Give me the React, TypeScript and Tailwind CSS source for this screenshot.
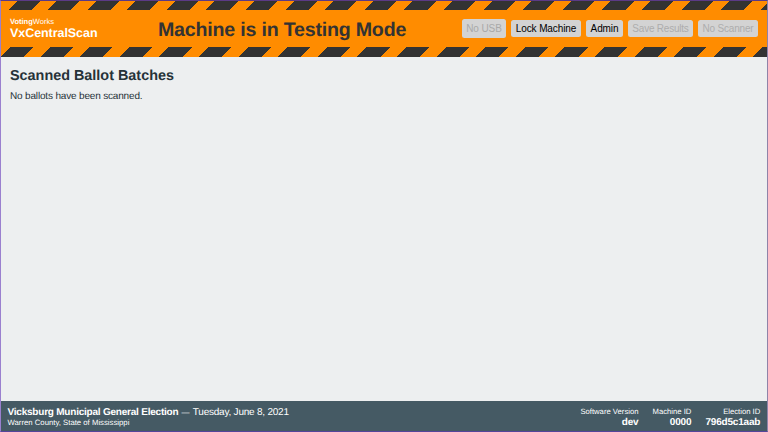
const stripes =
  'bg-[repeating-linear-gradient(135deg,#333_0px,#333_16.3px,#ff8c00_16.3px,#ff8c00_28px)]';

function HeaderButton({ label, className = '' }: { label: string; className?: string }) {
  return (
    <button
      className={`flex h-[17px] shrink-0 items-center justify-center whitespace-nowrap rounded-[2.5px] bg-[#d3d3d3] pt-px text-[10px] leading-none ${className}`}
    >
      {label}
    </button>
  );
}

function Meta({ label, value }: { label: string; value: string }) {
  return (
    <div className="flex shrink-0 flex-col items-end whitespace-nowrap">
      <div className="text-[7.7px] leading-[9px]">{label}</div>
      <div className="text-[10px] leading-[13px] font-bold tracking-[-0.18px]">{value}</div>
    </div>
  );
}

export default function App() {
  return (
    <div className="flex h-[432px] w-[768px] flex-col overflow-hidden border border-t-[#5b3a86] border-r-[#8f83a8] border-b-[#54459a] border-l-[#9a80cf] bg-[#edeff0] font-['Liberation_Sans',Arial,sans-serif] text-[#263238] [text-rendering:geometricPrecision]">
      <header className="flex h-14 shrink-0 flex-col bg-[#ff8c00]">
        <div className={`h-[9px] shrink-0 bg-position-[-23.6px_0px] bg-size-[900px_900px] ${stripes}`} />
        <div className="flex h-[37px] shrink-0 items-center pr-[9px] pl-[9px]">
          <div className="w-[148px] shrink-0 whitespace-nowrap text-white">
            <div className="text-[7.5px] leading-[9px]">
              <strong>Voting</strong>Works
            </div>
            <div className="text-[12.5px] leading-[14px] font-bold tracking-[-0.06px]">VxCentralScan</div>
          </div>
          <h1 className="grow whitespace-nowrap pt-[2px] text-[19.6px] leading-6 font-bold tracking-[-0.2px] text-[#333]">
            Machine is in Testing Mode
          </h1>
          <div className="flex items-center gap-[5px]">
            <HeaderButton label="No USB" className="h-[19px] w-[44px] tracking-[-0.1px] text-[#a9a9a9]" />
            <HeaderButton label="Lock Machine" className="w-[70px] tracking-[-0.12px] text-black" />
            <HeaderButton label="Admin" className="w-[37px] tracking-[-0.1px] text-black" />
            <HeaderButton label="Save Results" className="w-[65px] tracking-[-0.22px] text-[#adadad]" />
            <HeaderButton label="No Scanner" className="w-[60px] tracking-[-0.2px] text-[#adadad]" />
          </div>
        </div>
        <div className={`h-[10px] shrink-0 bg-position-[-30px_0px] bg-size-[900px_900px] ${stripes}`} />
      </header>
      <main className="grow px-[9px] pt-[11px]">
        <h2 className="text-[14.4px] leading-4 font-bold">Scanned Ballot Batches</h2>
        <p className="mt-[6px] text-[10px] leading-[14px] tracking-[-0.17px]">No ballots have been scanned.</p>
      </main>
      <footer className="flex h-[30px] shrink-0 justify-between bg-[#455a64] pt-[5.5px] pr-[6.7px] pl-[6.5px] text-white">
        <div className="whitespace-nowrap">
          <div className="text-[10px] leading-[11px] tracking-[-0.22px]">
            <strong>Vicksburg Municipal General Election</strong>{' '}
            <span className="mr-px ml-[0.5px] inline-block w-[8px] text-[8px]">—</span> Tuesday, June 8, 2021
          </div>
          <div className="text-[7.75px] leading-[9px]">Warren County, State of Mississippi</div>
        </div>
        <div className="flex gap-[14px]">
          <Meta label="Software Version" value="dev" />
          <Meta label="Machine ID" value="0000" />
          <Meta label="Election ID" value="796d5c1aab" />
        </div>
      </footer>
    </div>
  );
}
